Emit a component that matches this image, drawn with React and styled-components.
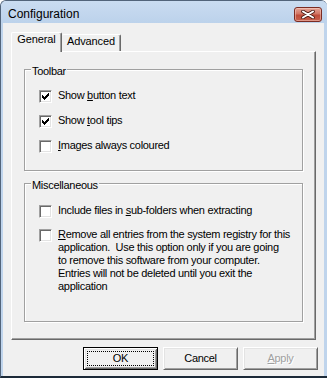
import React from "react";
import styled, { createGlobalStyle } from "styled-components";

const Global = createGlobalStyle`
  html, body { margin: 0; padding: 0; background: #ffffff; }
  body {
    font-family: "Liberation Sans", Arial, sans-serif;
    font-size: 11px;
    letter-spacing: -0.3px;
    color: #000;
  }
  * { box-sizing: border-box; }
`;

const Window = styled.div`
  width: 327px;
  height: 378px;
  display: flex;
  flex-direction: column;
  background: #bfd4ec;
  border-left: 1px solid #52647a;
  border-top: 1px solid #52647a;
  border-bottom: 2px solid #1c2a38;
  border-radius: 6px 6px 0 0;
  padding: 0 3px 0 2px;
  overflow: hidden;
`;

const TitleBar = styled.div`
  height: 22px;
  flex: none;
  display: flex;
  align-items: flex-start;
  background: linear-gradient(#cadcf1, #bcd2eb);
  margin: 0 -3px 0 -2px;
  padding: 0 5px 0 7px;
`;

const Title = styled.div`
  padding-top: 6px;
  font-family: "Liberation Sans", Arial, sans-serif;
  font-size: 12px;
  letter-spacing: 0;
  line-height: 14px;
  color: #000;
`;

const CloseButton = styled.div`
  margin: 6px 0 0 auto;
  width: 28px;
  height: 15px;
  border: 1px solid #7a2b22;
  border-radius: 3px;
  background: linear-gradient(#e3a497 0%, #d27564 45%, #bf4c3a 55%, #c7604c 100%);
  box-shadow: inset 0 0 0 1px rgba(255, 220, 210, 0.45);
  display: flex;
  align-items: center;
  justify-content: center;
`;

const Client = styled.div`
  flex: 1;
  display: flex;
  flex-direction: column;
  background: #f0f0f0;
  border-bottom: 2px solid #84cbea;
  padding: 9px 6px 8px 8px;
`;

const TabStrip = styled.div`
  height: 19px;
  display: flex;
  align-items: flex-end;
`;

const Tab = styled.div`
  position: relative;
  z-index: ${(p) => (p.$active ? 2 : 1)};
  width: ${(p) => p.$w}px;
  height: ${(p) => (p.$active ? 20 : 17)}px;
  margin-bottom: ${(p) => (p.$active ? -1 : 0)}px;
  background: #f0f0f0;
  border-top: 1px solid #ffffff;
  border-left: ${(p) => (p.$active ? "1px solid #ffffff" : "none")};
  border-right: 1px solid #696969;
  box-shadow: inset -1px 0 0 #a0a0a0;
  border-radius: 2px 2px 0 0;
  text-align: center;
  line-height: 13px;
  letter-spacing: -0.1px;
`;

const Panel = styled.div`
  position: relative;
  z-index: 0;
  margin-right: 2px;
  border: 1px solid;
  border-color: #ffffff #696969 #696969 #ffffff;
  box-shadow: inset -1px -1px 0 #a0a0a0;
  padding: 9px 12px 17px 12px;
  display: flex;
  flex-direction: column;
  gap: 4px;
`;

const GroupBox = styled.fieldset`
  margin: 0;
  padding: 0;
  min-inline-size: 0;
  border: 1px solid #a0a0a0;
  box-shadow: 1px 1px 0 #ffffff, inset 1px 1px 0 #ffffff;
`;

const Legend = styled.legend`
  margin-left: 6px;
  padding: 4px 1px 0;
  line-height: 13px;
  background: #f0f0f0;
`;

const GroupBody = styled.div`
  display: flex;
  flex-direction: column;
  gap: ${(p) => p.$gap}px;
  padding: ${(p) => p.$top}px 0 ${(p) => p.$bottom}px 14px;
`;

const Row = styled.div`
  display: flex;
  align-items: flex-start;
  gap: 6px;
`;

const Box = styled.span`
  flex: none;
  width: 13px;
  height: 13px;
  margin-top: 1px;
  background: #ffffff;
  border: 1px solid;
  border-color: #a0a0a0 #ffffff #ffffff #a0a0a0;
  box-shadow: inset 1px 1px 0 #696969, inset -1px -1px 0 #e3e3e3;
`;

const CheckSvg = styled.svg`
  display: block;
  margin: -1px;
`;

const Label = styled.span`
  line-height: 13px;
  white-space: nowrap;
`;

const U = styled.span`
  text-decoration: underline;
  text-underline-offset: 1px;
`;

const ButtonRow = styled.div`
  display: flex;
  justify-content: flex-end;
  gap: 5px;
  margin-top: 7px;
`;

const Button = styled.div`
  width: 75px;
  height: 23px;
  display: flex;
  align-items: center;
  justify-content: center;
  padding-bottom: 1px;
  line-height: 13px;
  background: #f0f0f0;
  border: 1px solid;
  border-color: ${(p) => (p.$default ? "#000000" : "#ffffff #696969 #696969 #ffffff")};
  box-shadow: ${(p) =>
    p.$default
      ? "inset 1px 1px 0 #ffffff, inset -1px -1px 0 #696969, inset 2px 2px 0 #e3e3e3, inset -2px -2px 0 #a0a0a0"
      : "inset 1px 1px 0 #e3e3e3, inset -1px -1px 0 #a0a0a0"};
  outline: ${(p) => (p.$default ? "1px dotted #000000" : "none")};
  outline-offset: -5px;
  color: ${(p) => (p.$disabled ? "#a0a0a0" : "#000000")};
  text-shadow: ${(p) => (p.$disabled ? "1px 1px 0 #ffffff" : "none")};
`;

function Check({ checked }) {
  const cols = [2, 3, 4, 3, 2, 1, 0];
  return (
    <Box>
      {checked && (
        <CheckSvg width="13" height="13" viewBox="0 0 13 13">
          {cols.map((r, c) => (
            <rect key={c} x={3 + c} y={3 + r} width="1" height="3" fill="#000" />
          ))}
        </CheckSvg>
      )}
    </Box>
  );
}

function CheckRow({ checked, children }) {
  return (
    <Row>
      <Check checked={checked} />
      <Label>{children}</Label>
    </Row>
  );
}

export default function App() {
  return (
    <>
      <Global />
      <Window>
        <TitleBar>
          <Title>Configuration</Title>
          <CloseButton>
            <svg width="14" height="9" viewBox="0 0 14 9">
              <path d="M2 1.5 L12 7.5 M12 1.5 L2 7.5" stroke="#4a1a14" strokeWidth="3.6" strokeLinecap="round" fill="none" />
              <path d="M2 1.5 L12 7.5 M12 1.5 L2 7.5" stroke="#ffffff" strokeWidth="2" strokeLinecap="round" fill="none" />
            </svg>
          </CloseButton>
        </TitleBar>
        <Client>
          <TabStrip>
            <Tab $active $w={51}>General</Tab>
            <Tab $w={59}>Advanced</Tab>
          </TabStrip>
          <Panel>
            <GroupBox>
              <Legend>Toolbar</Legend>
              <GroupBody $top={11} $bottom={17} $gap={11}>
                <CheckRow checked>
                  Show <U>b</U>utton text
                </CheckRow>
                <CheckRow checked>
                  Show <U>t</U>ool tips
                </CheckRow>
                <CheckRow>
                  <U>I</U>mages always coloured
                </CheckRow>
              </GroupBody>
            </GroupBox>
            <GroupBox>
              <Legend>Miscellaneous</Legend>
              <GroupBody $top={12} $bottom={28} $gap={10}>
                <CheckRow>
                  Include files in <U>s</U>ub-folders when extracting
                </CheckRow>
                <CheckRow>
                  <U>R</U>emove all entries from the system registry for this
                  <br />
                  application.&nbsp; Use this option only if you are going
                  <br />
                  to remove this software from your computer.
                  <br />
                  Entries will not be deleted until you exit the
                  <br />
                  application
                </CheckRow>
              </GroupBody>
            </GroupBox>
          </Panel>
          <ButtonRow>
            <Button $default>OK</Button>
            <Button>Cancel</Button>
            <Button $disabled>
              <span>
                <U>A</U>pply
              </span>
            </Button>
          </ButtonRow>
        </Client>
      </Window>
    </>
  );
}
